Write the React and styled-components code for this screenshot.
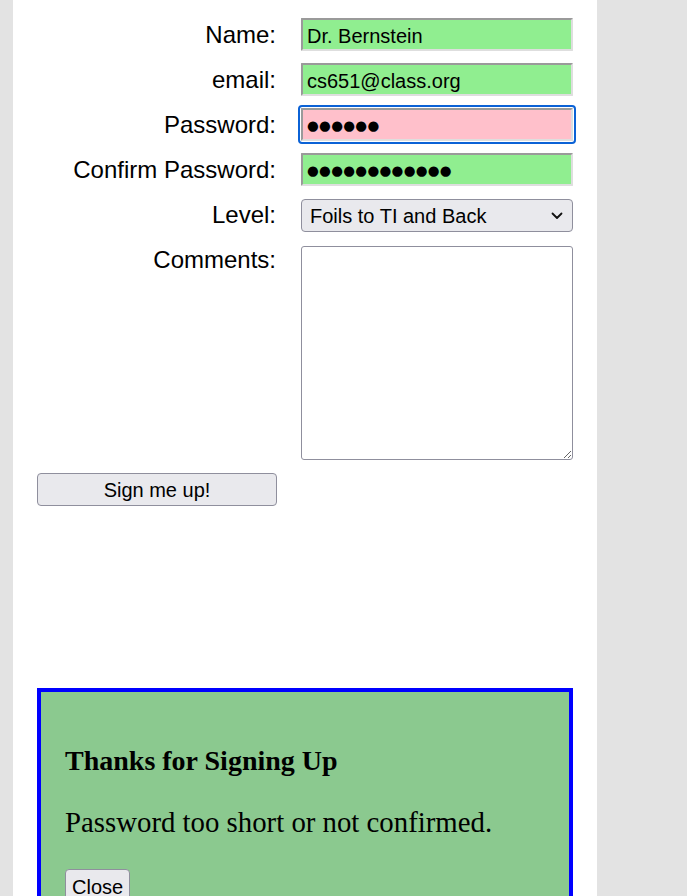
import React from 'react';
import styled, { createGlobalStyle } from 'styled-components';

const GlobalStyle = createGlobalStyle`
  html, body {
    margin: 0;
    padding: 0;
    background: #e3e3e3;
  }
`;

const fields = [
  { label: 'Name:', value: 'Dr. Bernstein', ok: true },
  { label: 'email:', value: 'cs651@class.org', ok: true },
  { label: 'Password:', value: '●●●●●●', ok: false, focused: true },
  { label: 'Confirm Password:', value: '●●●●●●●●●●●●', ok: true }
];

const Chevron = () => (
  <svg width="12" height="8" viewBox="0 0 12 8" fill="none">
    <path d="M1.5 1.5 L6 6 L10.5 1.5" stroke="#111" strokeWidth="1.8" strokeLinecap="round" strokeLinejoin="round" />
  </svg>
);

export default function App() {
  return (
    <>
      <GlobalStyle />
      <SCPage>
        <SCPanel>
          <SCForm>
            {fields.map(f => (
              <React.Fragment key={f.label}>
                <SCLabel>{f.label}</SCLabel>
                <SCInput type="text" defaultValue={f.value} $ok={f.ok} $focused={f.focused} $dots={f.value.startsWith('●')} />
              </React.Fragment>
            ))}
            <SCLabel>Level:</SCLabel>
            <SCSelectWrap>
              <SCSelect defaultValue="foils">
                <option value="foils">Foils to TI and Back</option>
              </SCSelect>
              <SCChevron>
                <Chevron />
              </SCChevron>
            </SCSelectWrap>
            <SCLabel $top>Comments:</SCLabel>
            <SCTextArea />
            <SCSubmit type="button">Sign me up!</SCSubmit>
          </SCForm>

          <SCModal>
            <SCModalTitle>Thanks for Signing Up</SCModalTitle>
            <SCModalText>Password too short or not confirmed.</SCModalText>
            <SCCloseButton type="button">Close</SCCloseButton>
          </SCModal>
        </SCPanel>
      </SCPage>
    </>
  );
}

const SCPage = styled.div`
  padding-left: 13px;
`;

const SCPanel = styled.div`
  box-sizing: border-box;
  width: 584px;
  min-height: 100vh;
  background: #fff;
  padding: 18px 24px 0;
`;

const SCForm = styled.form`
  display: grid;
  grid-template-columns: 240px 272px;
  column-gap: 24px;
  row-gap: 12px;
  align-items: center;
  margin: 0;
`;

const SCLabel = styled.label`
  font-family: 'Liberation Sans', Arial, sans-serif;
  font-size: 24px;
  color: #000;
  text-align: right;
  padding-right: 1px;
  align-self: ${p => (p.$top ? 'start' : 'center')};
  margin-top: ${p => (p.$top ? '2px' : '0')};
`;

const SCInput = styled.input`
  box-sizing: border-box;
  width: 272px;
  height: 33px;
  margin: 0;
  padding: ${p => (p.$dots ? '1px 4px 0' : '3px 4px 0')};
  font-family: ${p => (p.$dots ? "'DejaVu Sans', sans-serif" : "'Liberation Sans', Arial, sans-serif")};
  font-size: ${p => (p.$dots ? '13.5px' : '20px')};
  letter-spacing: ${p => (p.$dots ? '0.3px' : 'normal')};
  color: #000;
  background: ${p => (p.$ok ? '#90ee90' : '#ffc0cb')};
  border: 2px solid;
  border-color: #9a9a9a #dedede #dedede #9a9a9a;
  outline: ${p => (p.$focused ? '2px solid #0b62d6' : 'none')};
  outline-offset: 1px;
  border-radius: 1px;
`;

const SCSelectWrap = styled.div`
  position: relative;
  width: 272px;
  height: 33px;
  margin-top: 1px;
`;

const SCSelect = styled.select`
  appearance: none;
  box-sizing: border-box;
  width: 100%;
  height: 100%;
  margin: 0;
  padding: 1px 30px 0 8px;
  font-family: 'Liberation Sans', Arial, sans-serif;
  font-size: 20px;
  color: #000;
  background: #e9e9ed;
  border: 1px solid #8f8f9d;
  border-radius: 4px;
`;

const SCChevron = styled.span`
  position: absolute;
  right: 10px;
  top: 13px;
  display: flex;
  pointer-events: none;
`;

const SCTextArea = styled.textarea`
  box-sizing: border-box;
  width: 272px;
  height: 214px;
  margin: 2px 0 0;
  border: 1px solid #8f8f9d;
  border-radius: 3px;
  background: #fff;
  resize: both;
`;

const SCSubmit = styled.button`
  grid-column: 1;
  box-sizing: border-box;
  width: 240px;
  height: 33px;
  margin: 1px 0 0;
  padding-top: 2px;
  font-family: 'Liberation Sans', Arial, sans-serif;
  font-size: 20px;
  color: #000;
  background: #e9e9ed;
  border: 1px solid #8f8f9d;
  border-radius: 4px;
`;

const SCModal = styled.div`
  box-sizing: border-box;
  width: 536px;
  margin-top: 182px;
  padding: 29px 24px 24px;
  background: #8bc98f;
  border: 4px solid #0000ff;
`;

const SCModalTitle = styled.h2`
  margin: 24px 0 29px;
  font-family: 'Liberation Serif', 'Times New Roman', serif;
  font-weight: bold;
  font-size: 28px;
  color: #000;
`;

const SCModalText = styled.p`
  margin: 29px 0 30px;
  font-family: 'Liberation Serif', 'Times New Roman', serif;
  font-size: 28.8px;
  color: #000;
`;

const SCCloseButton = styled.button`
  margin: 0;
  padding: 6px 6px 2px;
  font-family: 'Liberation Sans', Arial, sans-serif;
  font-size: 20px;
  color: #000;
  background: #e9e9ed;
  border: 1px solid #8f8f9d;
  border-radius: 4px;
`;
